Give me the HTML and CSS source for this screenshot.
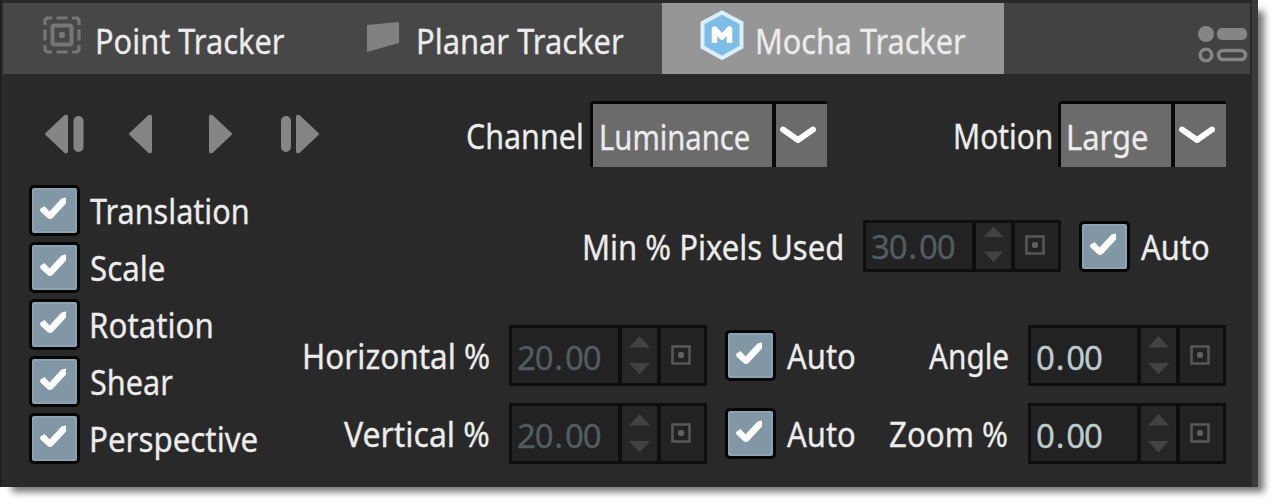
FILE: index.html
```html
<!DOCTYPE html>
<html lang="en">
<head>
<meta charset="utf-8">
<title>Mocha Tracker</title>
<link rel="stylesheet" href="styles.css">
</head>
<body>
<svg class="defs" width="0" height="0">
  <symbol id="check" viewBox="0 0 45 45"><path d="M8 21L12.500 18L17.500 23.500L29.500 10.500L34 9.500V15.500L20.500 30Q18 32 15.500 30L8.500 23.500z" fill="#fff"/></symbol>
  <symbol id="spin" viewBox="0 0 35 54"><path d="M7 19.500L17.500 8L28 19.500zM7 35L17.500 46.500L28 35z" fill="#424242"/></symbol>
  <symbol id="key" viewBox="0 0 20 20"><rect x="1.500" y="1.500" width="17" height="17" fill="none" stroke="#565656" stroke-width="2.600"/><rect x="7" y="7" width="6" height="6" rx="2" fill="#606060"/></symbol>
  <symbol id="chevron" viewBox="0 0 36 20"><path d="M3 3.500L18 14L33 3.500" fill="none" stroke="#fff" stroke-width="5.800" stroke-linejoin="round" stroke-linecap="round"/></symbol>
</svg>
<main class="panel">
  <nav class="tabs">
    <div class="tab tab-point">
      <svg class="tab-icon" width="40" height="40" viewBox="0 0 40 40"><g fill="none" stroke="#767676" stroke-width="3.200"><path d="M3 10V5L5 3H10M14.500 3H25.500M30 3H35L37 5V10M37 14.500V25.500M37 30V35L35 37H30M25.500 37H14.500M10 37H5L3 35V30M3 25.500V14.500"/><rect x="10.500" y="10.500" width="19" height="19" rx="2" stroke-width="4"/></g><rect x="17" y="17" width="6" height="6" rx="2" fill="#767676"/></svg>
      <span class="label f-point">Point Tracker</span>
    </div>
    <div class="tab tab-planar">
      <svg class="tab-icon" width="34" height="32" viewBox="0 0 34 32"><path d="M1 3L33 0V21L1 30z" fill="#818181"/></svg>
      <span class="label f-planar">Planar Tracker</span>
    </div>
    <div class="tab tab-mocha">
      <svg class="tab-icon" width="44" height="50" viewBox="0 0 44 50"><path d="M22 2.500L41.500 13V37L22 48L2.500 37V13z" fill="#7fbce8" stroke="#d9effb" stroke-width="4"/><path d="M14.500 33V19L22 27L29.500 19V33" fill="none" stroke="#fff" stroke-width="5.500" stroke-linejoin="round"/></svg>
      <span class="label f-mocha">Mocha Tracker</span>
    </div>
    <svg class="options" width="50" height="38" viewBox="0 0 50 38"><circle cx="8" cy="8" r="8" fill="#858585"/><rect x="19" y="2" width="30" height="12" rx="5" fill="#858585"/><g fill="none" stroke="#858585" stroke-width="3.600"><circle cx="8" cy="29" r="5.800"/><rect x="20.500" y="24.500" width="27" height="9" rx="4.500"/></g></svg>
  </nav>
  <section class="toolbar">
    <svg class="transport" width="278" height="42" viewBox="0 0 278 42"><g fill="#858585" stroke="#858585" stroke-width="2" stroke-linejoin="round"><path d="M2 21L21 3Q23 2 23 4V38Q23 40 21 39zM86 21L105 3Q107 2 107 4V38Q107 40 105 39zM187 21L168 3Q166 2 166 4V38Q166 40 168 39zM274 21L255 3Q253 2 253 4V38Q253 40 255 39z"/><rect x="30.500" y="4" width="8" height="34" rx="4"/><rect x="238" y="4" width="8" height="34" rx="4"/></g></svg>
    <span class="label f-channel">Channel</span>
    <div class="select select-channel"><div class="select-value"><span class="label f-luminance">Luminance</span></div><div class="select-arrow"><svg width="36" height="20"><use href="#chevron"/></svg></div></div>
    <span class="label f-motion">Motion</span>
    <div class="select select-motion"><div class="select-value"><span class="label f-large">Large</span></div><div class="select-arrow"><svg width="36" height="20"><use href="#chevron"/></svg></div></div>
  </section>
  <section class="content">
    <div class="components">
      <div class="option"><span class="box"><svg><use href="#check"/></svg></span><span class="label f-translation">Translation</span></div>
      <div class="option"><span class="box"><svg><use href="#check"/></svg></span><span class="label f-scale">Scale</span></div>
      <div class="option"><span class="box"><svg><use href="#check"/></svg></span><span class="label f-rotation">Rotation</span></div>
      <div class="option"><span class="box"><svg><use href="#check"/></svg></span><span class="label f-shear">Shear</span></div>
      <div class="option"><span class="box"><svg><use href="#check"/></svg></span><span class="label f-perspective">Perspective</span></div>
    </div>
    <div class="settings">
      <div class="row row-min">
        <span class="label f-min">Min % Pixels Used</span>
        <div class="field field-short disabled"><div class="num">30<i>.</i>00</div><div class="spin"><svg><use href="#spin"/></svg></div><div class="key"><svg><use href="#key"/></svg></div></div>
        <span class="box"><svg><use href="#check"/></svg></span><span class="label f-auto">Auto</span>
      </div>
      <div class="row row-search">
        <span class="label f-horizontal">Horizontal %</span>
        <div class="field disabled"><div class="num">20<i>.</i>00</div><div class="spin"><svg><use href="#spin"/></svg></div><div class="key"><svg><use href="#key"/></svg></div></div>
        <span class="box"><svg><use href="#check"/></svg></span><span class="label f-auto">Auto</span>
        <span class="label f-angle">Angle</span>
        <div class="field"><div class="num">0<i>.</i>00</div><div class="spin"><svg><use href="#spin"/></svg></div><div class="key"><svg><use href="#key"/></svg></div></div>
      </div>
      <div class="row row-search row-last">
        <span class="label f-vertical">Vertical %</span>
        <div class="field disabled"><div class="num">20<i>.</i>00</div><div class="spin"><svg><use href="#spin"/></svg></div><div class="key"><svg><use href="#key"/></svg></div></div>
        <span class="box"><svg><use href="#check"/></svg></span><span class="label f-auto">Auto</span>
        <span class="label f-zoom">Zoom %</span>
        <div class="field"><div class="num">0<i>.</i>00</div><div class="spin"><svg><use href="#spin"/></svg></div><div class="key"><svg><use href="#key"/></svg></div></div>
      </div>
    </div>
  </section>
</main>
</body>
</html>
```
FILE: styles.css
```css
* { box-sizing: border-box; }
html { background: #fff; overflow: hidden; }
body { margin: 0; font: 34px/46px "Noto Sans", sans-serif; color: #ececec; -webkit-text-stroke: .3px; overflow: hidden; height: 503px; }
.defs { display: none; }
svg { display: block; flex: none; }

.panel { width: 1258px; height: 487px; padding: 3px 0 0 2px; background: #292929; border-left: 1px solid #1b1b1b; border-right: 6px solid #3b3b3b; box-shadow: 9px 8px 7px -3px rgba(0, 0, 0, .55); }

/* Text is set slightly narrow; --fit is the horizontal scale. */
.label { flex: none; display: block; white-space: nowrap; transform: scaleX(var(--fit)); transform-origin: 0 50%; }

.tabs { display: flex; width: 1247px; height: 71px; background: #424242; }
.tab { display: flex; align-items: flex-start; height: 71px; background: #474747; }
.tab .label { margin-top: 15px; }
.tab-point { width: 322px; padding-left: 39px; }
.tab-point .tab-icon { margin-top: 12px; }
.tab-planar { width: 337px; padding-left: 41px; }
.tab-planar .tab-icon { margin-top: 19px; }
.tab-mocha { width: 342px; padding-left: 38px; background: #969696; }
.tab-mocha .tab-icon { margin-top: 7px; }
.options { margin: 23px 2px 0 auto; }
.f-point { --fit: .905; width: 190px; margin-left: 13px; }
.f-planar { --fit: .908; width: 210px; margin-left: 16px; }
.f-mocha { --fit: .9; width: 210px; margin-left: 11px; }

.toolbar { display: flex; align-items: center; height: 66px; margin-top: 27px; }
.transport { margin-left: 41px; }
.f-channel { --fit: .895; width: 125px; margin: 4px 0 0 144px; }
.f-motion { --fit: .88; width: 105px; margin: 4px 0 0 126px; }
.select { display: flex; flex: none; gap: 4px; height: 66px; padding: 3px 0 0 3px; background: #080808; border-radius: 4px 0 0 0; }
.toolbar .select-channel { margin-left: -1px; }
.select-value { display: flex; align-items: center; height: 63px; background: #6b6b6b; }
.select-arrow { width: 51px; height: 63px; padding: 22px 0 0 4px; background: #6b6b6b; }
.select-channel { width: 237px; }
.select-channel .select-value { width: 179px; }
.select-motion { width: 168px; }
.select-motion .select-value { width: 110px; }
.f-luminance { --fit: .86; margin: 3px 0 0 6px; }
.f-large { --fit: .91; margin: 3px 0 0 5px; }

.content { display: flex; margin-top: 18px; }
.components { display: flex; flex-direction: column; gap: 6px; width: 273px; padding-left: 26px; }
.option { display: flex; align-items: center; height: 51px; }
.option .label { margin: 1px 0 0 10px; }
.box { flex: none; width: 51px; height: 51px; border: 3px solid #060606; border-radius: 5px; background: #8297a6; box-shadow: inset 0 0 0 2px #8ca3b2; }
.box svg { width: 45px; height: 45px; }
.f-translation { --fit: .9; }
.f-scale { --fit: .92; }
.f-rotation { --fit: .92; }
.f-shear { --fit: .9; }
.f-perspective { --fit: .92; }
.option .f-rotation, .option .f-perspective { margin-left: 9px; }

.settings { display: flex; flex-direction: column; width: 970px; padding-top: 35px; }
.row { display: flex; align-items: center; }
.row > .label { padding-top: 1px; }
.row-min { height: 52px; margin-bottom: 53px; }
.row-search { height: 61px; margin-bottom: 17px; }
.f-min { --fit: .912; width: 281px; margin-left: 306px; }
.f-horizontal { --fit: .925; width: 207px; margin-left: 26px; }
.f-vertical { --fit: .94; width: 165px; margin-left: 68px; }
.f-auto { --fit: .91; width: 76px; margin-left: 11px; }
.f-angle { --fit: .875; width: 99px; margin-left: 66px; }
.f-zoom { --fit: .92; width: 139px; margin-left: 26px; }
.row .box { margin-left: 18px; }

.field { display: flex; flex: none; gap: 4px; width: 198px; height: 61px; padding: 3px; background: #0e0e0e; color: #bccbd0; }
.field > div { background: #222; }
.field .spin { background: #262626; }
.disabled { color: #515c63; }
.num { width: 106px; padding: 7px 0 0 5px; font-size: 33px; letter-spacing: -1.2px; }
.num i { font-style: normal; padding: 0 3px 0 2px; }
.spin { width: 35px; }
.spin svg { width: 35px; height: 54px; }
.key { width: 43px; padding: 17px 0 0 10px; }
.key svg { width: 20px; height: 20px; }
.field-short { height: 52px; }
.field-short .num { padding-top: 1px; }
.field-short .spin svg { margin-top: -4px; height: 50px; }
.field-short .key { padding-top: 12px; }
```
